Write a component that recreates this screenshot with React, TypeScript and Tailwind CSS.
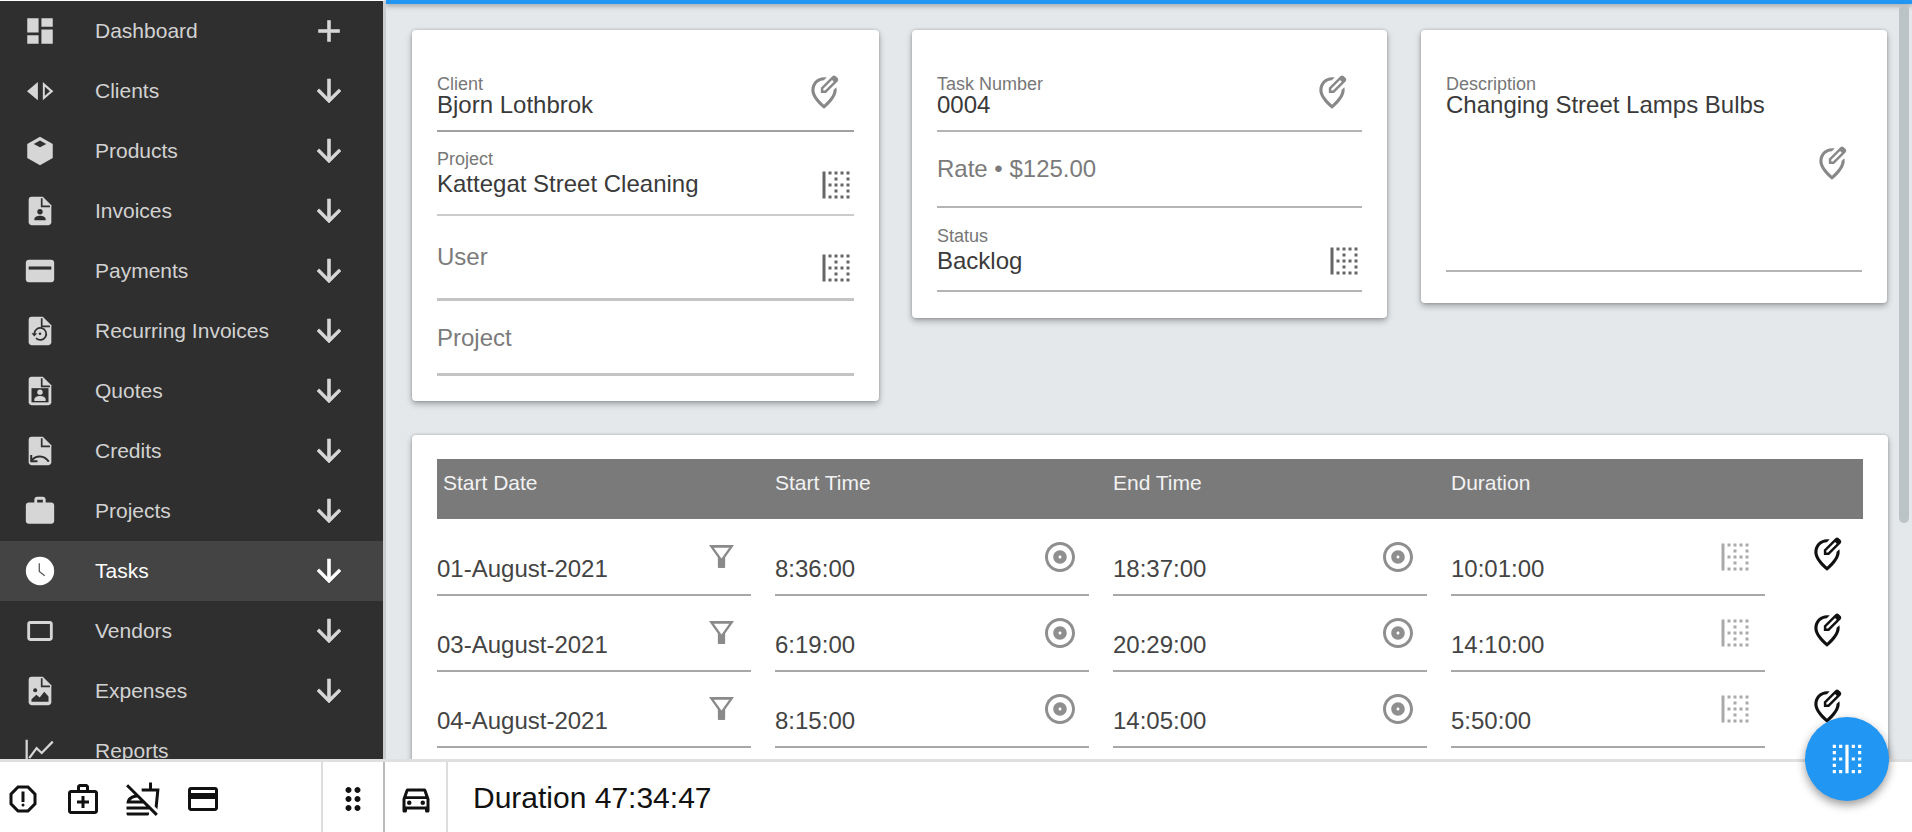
import React from "react";
import {
  MdDashboard, MdWork, MdCropLandscape,
  MdOutlineReport, MdOutlineMedicalServices, MdOutlineNoFood, MdOutlinePayment, MdDragIndicator,
  MdOutlineDirectionsCar, MdOutlineEditLocation, MdOutlineAlbum, MdBorderLeft, MdBorderVertical,
} from "react-icons/md";

const D = "#2f2f2f";
const FILE = "M14 2H6c-1.1 0-2 .9-2 2v16c0 1.1.9 2 2 2h12c1.1 0 2-.9 2-2V8l-6-6z";

function Glyph({ children, c }: { children: React.ReactNode; c: string }) {
  return (
    <svg viewBox="0 0 24 24" width={34} height={34} fill={c}>
      {children}
    </svg>
  );
}

function FileIcon({ c, children }: { c: string; children?: React.ReactNode }) {
  return (
    <Glyph c={c}>
      <path d={FILE} />
      <path d="M13.2 3v5.8H19" fill="none" stroke={D} strokeWidth="1.2" />
      {children}
    </Glyph>
  );
}

const nav: { label: string; icon: (c: string) => React.ReactNode; plus?: boolean; active?: boolean }[] = [
  { label: "Dashboard", plus: true, icon: (c) => <MdDashboard size={34} color={c} /> },
  {
    label: "Clients",
    icon: (c) => (
      <Glyph c={c}>
        <path d="M10.5 5.6v13L2.8 12.1z" />
        <path fillRule="evenodd" d="M14 5.6v13l7.4-6.5zM15.4 9v6.3l3.6-3.2z" />
      </Glyph>
    ),
  },
  {
    label: "Products",
    icon: (c) => (
      <Glyph c={c}>
        <path d="M12 2l9 5v10l-9 5-9-5V7z" />
        <path d="M12 4.6L16.4 7 12 9.4 7.6 7z" fill={D} />
      </Glyph>
    ),
  },
  {
    label: "Invoices",
    icon: (c) => (
      <FileIcon c={c}>
        <circle cx="12" cy="12.5" r="1.9" fill={D} />
        <path d="M8 18.5v-.8c0-1.3 1.8-2.4 4-2.4s4 1.1 4 2.4v.8z" fill={D} />
      </FileIcon>
    ),
  },
  {
    label: "Payments",
    icon: (c) => (
      <Glyph c={c}>
        <path d="M4 4h16c1.1 0 2 .9 2 2v12c0 1.1-.9 2-2 2H4c-1.1 0-2-.9-2-2V6c0-1.1.9-2 2-2z" />
        <rect x="4" y="8.8" width="16" height="2.2" fill={D} />
      </Glyph>
    ),
  },
  {
    label: "Recurring Invoices",
    icon: (c) => (
      <FileIcon c={c}>
        <path d="M8 14a4.2 4.2 0 1 1 1.2 3" fill="none" stroke={D} strokeWidth="1.2" />
        <path d="M6 13.6h4l-2 2.2z" fill={D} />
        <circle cx="12" cy="14" r="0.9" fill={D} />
      </FileIcon>
    ),
  },
  {
    label: "Quotes",
    icon: (c) => (
      <FileIcon c={c}>
        <rect x="6" y="10" width="12" height="10" fill={D} />
        <circle cx="12" cy="12.8" r="1.9" fill={c} />
        <path d="M8 19v-1c0-1.3 1.8-2.4 4-2.4s4 1.1 4 2.4v1z" fill={c} />
      </FileIcon>
    ),
  },
  {
    label: "Credits",
    icon: (c) => (
      <FileIcon c={c}>
        <path d="M6.2 18.6c3-3.6 8.6-3.8 12 .9" fill="none" stroke={D} strokeWidth="1.4" />
        <path d="M5.8 14.8v4.4h4.4" fill="none" stroke={D} strokeWidth="1.4" />
      </FileIcon>
    ),
  },
  { label: "Projects", icon: (c) => <MdWork size={34} color={c} /> },
  {
    label: "Tasks",
    active: true,
    icon: (c) => (
      <Glyph c={c}>
        <circle cx="12" cy="12" r="10" />
        <path d="M11.5 6.5v5.8l3.8 3" fill="none" stroke="#555555" strokeWidth="0.9" />
      </Glyph>
    ),
  },
  { label: "Vendors", icon: (c) => <MdCropLandscape size={34} color={c} /> },
  {
    label: "Expenses",
    icon: (c) => (
      <FileIcon c={c}>
        <circle cx="8.6" cy="11.4" r="1.4" fill={D} />
        <path d="M6 19.6v-1.8l3.4-3.2 2.4 1.9 3.2-4 3 3.4v3.7z" fill={D} />
      </FileIcon>
    ),
  },
  {
    label: "Reports",
    icon: (c) => (
      <Glyph c={c}>
        <path d="M2.6 4v18M4.4 17L9.6 10l3.6 3.4 7.8-8" fill="none" stroke={c} strokeWidth="1.6" />
      </Glyph>
    ),
  },
];

const ArrowOrPlus = ({ plus, c }: { plus?: boolean; c: string }) => (
  <svg viewBox="0 0 24 24" width={36} height={36} fill={c} stroke={c} strokeWidth={0.4} className="block">
    <path
      d={
        plus
          ? "M19 13h-6v6h-2v-6H5v-2h6V5h2v6h6v2z"
          : "M20 12l-1.41-1.41L13 16.17V4h-2v12.17l-5.58-5.59L4 12l8 8 8-8z"
      }
    />
  </svg>
);

function NavRow({ item }: { item: (typeof nav)[number] }) {
  const c = item.active ? "#ffffff" : "#d6d6d6";
  return (
    <div className={`flex h-[60px] shrink-0 items-center ${item.active ? "bg-[#444444] text-white" : "text-[#d2d2d2]"}`}>
      <div className="ml-[23px] w-[34px] shrink-0">{item.icon(c)}</div>
      <div className="ml-[38px] flex-1 text-[21px] leading-[28px]">{item.label}</div>
      {item.label !== "Reports" && (
        <div className="mr-[36px] w-[36px] shrink-0">
          <ArrowOrPlus plus={item.plus} c={c} />
        </div>
      )}
    </div>
  );
}

function Field({
  label, value, placeholder, pad, gap, heightClass, borderClass, icon,
}: {
  label?: string; value?: string; placeholder?: string; pad: string; gap?: string;
  heightClass: string; borderClass: string; icon?: React.ReactNode;
}) {
  return (
    <div className={`flex justify-between ${heightClass} ${borderClass}`}>
      <div className={pad}>
        {label && <div className="text-[18px] leading-[20px] text-[#777777]">{label}</div>}
        {value && <div className={`text-[24px] leading-[28px] text-[#3a3a3a] ${gap ?? ""}`}>{value}</div>}
        {placeholder && <div className="text-[24px] leading-[28px] text-[#7b7b7b]">{placeholder}</div>}
      </div>
      {icon}
    </div>
  );
}

const Pin = ({ cls, color = "#888888" }: { cls: string; color?: string }) => (
  <div className={`self-end ${cls}`}>
    <MdOutlineEditLocation size={38} color={color} className="block" />
  </div>
);
const GridIco = ({ cls }: { cls: string }) => (
  <div className={`self-end ${cls}`}>
    <MdBorderLeft size={36} color="#666666" className="block" />
  </div>
);

const rows = [
  ["01-August-2021", "8:36:00", "18:37:00", "10:01:00"],
  ["03-August-2021", "6:19:00", "20:29:00", "14:10:00"],
  ["04-August-2021", "8:15:00", "14:05:00", "5:50:00"],
];

const Filter = () => (
  <svg viewBox="0 0 24 24" width={25} height={25} fill="#8a8a8a" className="block">
    <path fillRule="evenodd" d="M0 1h24l-8.5 12v9.2c0 .5-.3.8-.8.8H9.3c-.5 0-.8-.3-.8-.8V13zM4.6 3.6L12 13.8l7.4-10.2z" />
  </svg>
);

const RowField = ({ text, children }: { text: string; children: React.ReactNode }) => (
  <div className="flex h-[76px] justify-between border-b-2 border-[#a8a8a8]">
    <div className="pt-[35px] text-[24px] leading-[28px] text-[#444444]">{text}</div>
    {children}
  </div>
);

const card = "rounded-[4px] bg-white shadow-[0_0_3px_rgba(0,0,0,0.2),0_3px_6px_rgba(0,0,0,0.3)]";

export default function App() {
  return (
    <div className="relative flex h-[832px] w-[1912px] flex-col overflow-hidden bg-white font-['Liberation_Sans',Arial,sans-serif]">
      <div className="flex h-[759px] shrink-0">
        <aside className="flex w-[386px] shrink-0 flex-col overflow-hidden border-t border-r-[3px] border-t-white border-r-[#c9cdcf] bg-[#2f2f2f]">
          {nav.map((n) => (
            <NavRow key={n.label} item={n} />
          ))}
        </aside>
        <main className="relative flex-1 overflow-hidden bg-[#e4e8eb]">
          <div className="h-[4px] bg-[#2196f3] shadow-[0_2px_5px_rgba(0,0,0,0.35)]" />
          <div className="absolute top-[5px] right-[3px] h-[518px] w-[10px] rounded-[5px] bg-[#bcc3c6]" />
          <div className="mt-[26px] flex items-start pl-[26px]">
            <section className={`${card} w-[467px] px-[25px] pb-[25px]`}>
              <Field heightClass="h-[102px]" borderClass="border-b-2 border-[#a0a0a0]" pad="pt-[44px]" gap="-mt-[3px]" label="Client" value="Bjorn Lothbrok" icon={<Pin cls="mr-[11px] mb-[18px]" />} />
              <Field heightClass="h-[84px]" borderClass="border-b-2 border-[#cccccc]" pad="pt-[17px]" gap="mt-[1px]" label="Project" value="Kattegat Street Cleaning" icon={<GridIco cls="mb-[11px]" />} />
              <Field heightClass="h-[85px]" borderClass="border-b-[3px] border-[#c4c4c4]" pad="pt-[27px]" placeholder="User" icon={<GridIco cls="mb-[12px]" />} />
              <Field heightClass="h-[75px]" borderClass="border-b-[3px] border-[#c4c4c4]" pad="pt-[23px]" placeholder="Project" />
            </section>
            <section className={`${card} ml-[33px] w-[475px] px-[25px] pb-[26px]`}>
              <Field heightClass="h-[102px]" borderClass="border-b-2 border-[#b4b4b4]" pad="pt-[44px]" gap="-mt-[3px]" label="Task Number" value="0004" icon={<Pin cls="mr-[11px] mb-[18px]" />} />
              <Field heightClass="h-[76px]" borderClass="border-b-2 border-[#b4b4b4]" pad="pt-[23px]" placeholder="Rate • $125.00" />
              <Field heightClass="h-[84px]" borderClass="border-b-2 border-[#b4b4b4]" pad="pt-[18px]" gap="mt-[1px]" label="Status" value="Backlog" icon={<GridIco cls="mb-[11px]" />} />
            </section>
            <section className={`${card} ml-[34px] w-[466px] px-[25px] pb-[31px]`}>
              <Field heightClass="h-[242px]" borderClass="border-b-2 border-[#b4b4b4]" pad="pt-[44px]" gap="-mt-[3px]" label="Description" value="Changing Street Lamps Bulbs" icon={<Pin cls="mr-[11px] mb-[87px]" />} />
            </section>
          </div>
          <section className={`${card} mt-[34px] ml-[26px] w-[1476px] px-[25px] pt-[24px] pb-[30px]`}>
            <div className="mb-[1px] grid h-[60px] grid-cols-[314px_314px_314px_314px_1fr] gap-x-[24px] bg-[#7a7a7a] pt-[12px] text-[21px] leading-[24px] text-[#f2f2f2]">
              <div className="pl-[6px]">Start Date</div>
              <div>Start Time</div>
              <div>End Time</div>
              <div>Duration</div>
            </div>
            {rows.map((r) => (
              <div key={r[0]} className="grid grid-cols-[314px_314px_314px_314px_1fr] gap-x-[24px]">
                <RowField text={r[0]}>
                  <div className="mt-[24px] mr-[17px]"><Filter /></div>
                </RowField>
                <RowField text={r[1]}>
                  <div className="mt-[19px] mr-[11px]"><MdOutlineAlbum size={36} color="#8f8f8f" className="block" /></div>
                </RowField>
                <RowField text={r[2]}>
                  <div className="mt-[19px] mr-[11px]"><MdOutlineAlbum size={36} color="#8f8f8f" className="block" /></div>
                </RowField>
                <RowField text={r[3]}>
                  <div className="mt-[19px] mr-[12px]"><MdBorderLeft size={36} color="#aaaaaa" className="block" /></div>
                </RowField>
                <div className="mt-[16px] ml-[19px]">
                  <MdOutlineEditLocation size={38} color="#111111" className="block" />
                </div>
              </div>
            ))}
          </section>
        </main>
      </div>
      <footer className="flex flex-1 border-t-[3px] border-[#e0e0e0] bg-white">
        <div className="flex w-[323px] items-center gap-x-[24px] border-r-2 border-[#dddddd] pt-[3px] pl-[5px]">
          <MdOutlineReport size={36} color="#111111" />
          <MdOutlineMedicalServices size={36} color="#111111" />
          <MdOutlineNoFood size={36} color="#111111" />
          <MdOutlinePayment size={36} color="#111111" />
        </div>
        <div className="flex w-[62px] items-center justify-center border-r-2 border-[#bbbbbb] pt-[3px]">
          <MdDragIndicator size={36} color="#111111" />
        </div>
        <div className="flex w-[63px] items-center justify-center border-r-2 border-[#dddddd] pt-[3px]">
          <MdOutlineDirectionsCar size={36} color="#111111" />
        </div>
        <div className="ml-[25px] flex items-center text-[30px] text-[#111111]">Duration 47:34:47</div>
      </footer>
      <button className="absolute right-[23px] bottom-[31px] flex h-[84px] w-[84px] items-center justify-center rounded-full bg-[#2196f3] shadow-[0_4px_10px_rgba(0,0,0,0.4)]">
        <MdBorderVertical size={38} color="#ffffff" />
      </button>
    </div>
  );
}
